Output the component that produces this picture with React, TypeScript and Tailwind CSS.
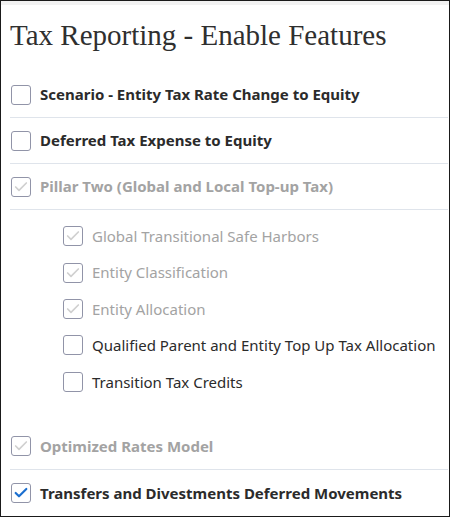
import { Check } from 'lucide-react';

type Item = {
  label: string;
  checked?: boolean;
  disabled?: boolean;
};

function Box({ checked, disabled }: { checked?: boolean; disabled?: boolean }) {
  return (
    <span className="flex h-[20px] w-[20px] shrink-0 items-center justify-center rounded-[3px] border border-[#9194a8] bg-white">
      {checked && (
        <Check
          size={16}
          strokeWidth={disabled ? 2.5 : 3.2}
          className={disabled ? 'text-[#d0d0d0]' : 'text-[#1b6fd0]'}
        />
      )}
    </span>
  );
}

function TopRow({ label, checked, disabled, line = true }: Item & { line?: boolean }) {
  return (
    <div className={`flex h-[46px] items-center gap-[9px] pl-[1px] ${line ? 'border-b border-[#dfe4eb]' : ''}`}>
      <Box checked={checked} disabled={disabled} />
      <span
        className={`text-[15px] font-bold ${disabled ? 'text-[#a3a3a3]' : 'text-[#2b2b2b]'}`}
      >
        {label}
      </span>
    </div>
  );
}

function SubRow({ label, checked, disabled }: Item) {
  return (
    <div className="flex h-[36.4px] items-center gap-[9px]">
      <Box checked={checked} disabled={disabled} />
      <span className={`text-[15px] ${disabled ? 'text-[#a3a3a3]' : 'text-[#2b2b2b]'}`}>{label}</span>
    </div>
  );
}

const subs: Item[] = [
  { label: 'Global Transitional Safe Harbors', checked: true, disabled: true },
  { label: 'Entity Classification', checked: true, disabled: true },
  { label: 'Entity Allocation', checked: true, disabled: true },
  { label: 'Qualified Parent and Entity Top Up Tax Allocation' },
  { label: 'Transition Tax Credits' },
];

export default function App() {
  return (
    <main className="h-[517px] w-[450px] overflow-hidden border border-[#1a1a1a] bg-white" style={{ fontFamily: '"Noto Sans", "Open Sans", sans-serif' }}>
      <div className="h-[4px] bg-[#f2f2f2]" />
      <div className="pl-[9px] pr-[1px]">
        <h1
          className="pt-[11px] text-[29px] leading-[38px] text-[#2f2f2f]"
          style={{ fontFamily: '"Liberation Serif", "DejaVu Serif", serif' }}
        >
          Tax Reporting - Enable Features
        </h1>

        <div className="mt-[18px]">
          <TopRow label="Scenario - Entity Tax Rate Change to Equity" />
          <TopRow label="Deferred Tax Expense to Equity" />
          <TopRow label="Pillar Two (Global and Local Top-up Tax)" checked disabled />
        </div>

        <div className="pl-[53px] pt-[8px]">
          {subs.map((s) => (
            <SubRow key={s.label} {...s} />
          ))}
        </div>

        <div className="mt-[24px]">
          <TopRow label="Optimized Rates Model" checked disabled />
          <TopRow label="Transfers and Divestments Deferred Movements" checked line={false} />
        </div>
      </div>
    </main>
  );
}
